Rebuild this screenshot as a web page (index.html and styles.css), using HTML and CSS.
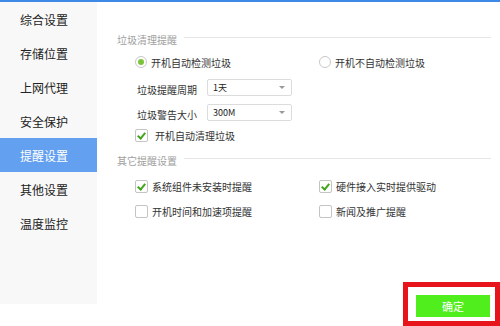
FILE: index.html
```html
<!DOCTYPE html>
<html lang="zh-CN">
<head>
    <meta charset="UTF-8">
    <meta name="viewport" content="width=device-width, initial-scale=1.0">
    <title>提醒设置</title>
    <link rel="stylesheet" href="styles.css">
</head>
<body>
    <div class="topbar"></div>
    <div class="window">
        <ul class="sidebar">
            <li>综合设置</li>
            <li>存储位置</li>
            <li>上网代理</li>
            <li>安全保护</li>
            <li class="active">提醒设置</li>
            <li>其他设置</li>
            <li>温度监控</li>
        </ul>
        <div class="content">
            <div class="section-title"><span>垃圾清理提醒</span></div>
            <div class="row radios">
                <label class="opt"><span class="radio checked"></span>开机自动检测垃圾</label>
                <label class="opt right"><span class="radio"></span>开机不自动检测垃圾</label>
            </div>
            <div class="row field first">
                <span class="field-label">垃圾提醒周期</span>
                <div class="select">1天<span class="arrow"></span></div>
            </div>
            <div class="row field">
                <span class="field-label">垃圾警告大小</span>
                <div class="select">300M<span class="arrow"></span></div>
            </div>
            <div class="row checks single">
                <label class="opt"><span class="check checked"></span>开机自动清理垃圾</label>
            </div>

            <div class="section-title second"><span>其它提醒设置</span></div>
            <div class="row checks">
                <label class="opt"><span class="check checked"></span>系统组件未安装时提醒</label>
                <label class="opt right"><span class="check checked"></span>硬件接入实时提供驱动</label>
            </div>
            <div class="row checks">
                <label class="opt"><span class="check"></span>开机时间和加速项提醒</label>
                <label class="opt right"><span class="check"></span>新闻及推广提醒</label>
            </div>

            <div class="footer">
                <span class="highlight"><button class="ok">确定</button></span>
            </div>
        </div>
    </div>
</body>
</html>
```

FILE: styles.css
```css
body {
    margin: 0;
    font-family: "Noto Sans CJK SC", "Noto Sans", sans-serif;
    color: #333;
    background: #fff;
    overflow: hidden;
}
.topbar {
    height: 2px;
    background: #3d8ae6;
}
.window {
    display: flex;
    height: 324px;
}
.sidebar {
    list-style: none;
    margin: 0;
    padding: 0;
    width: 97px;
    height: 302px;
    background: #f8f8f8;
    flex-shrink: 0;
}
.sidebar li {
    height: 34px;
    line-height: 36px;
    padding-left: 20px;
    font-size: 12px;
    color: #222;
}
.sidebar li.active {
    background: #64a0f0;
    color: #fff;
}
.content {
    flex: 1;
    display: flex;
    flex-direction: column;
    padding: 0 9px 0 20px;
    font-size: 10px;
}
.section-title {
    display: flex;
    align-items: center;
    gap: 7px;
    margin-top: 29px;
    height: 16px;
    color: #a0a0a0;
}
.section-title::after {
    content: "";
    flex: 1;
    height: 1px;
    background: #e6e6e6;
    margin-top: -3px;
}
.section-title.second {
    margin-top: 10px;
}
.row {
    display: flex;
    align-items: center;
    padding-left: 18px;
}
.radios {
    height: 16px;
    margin-top: 7px;
}
.opt {
    display: flex;
    align-items: center;
    width: 184px;
    white-space: nowrap;
}
.opt.right {
    width: auto;
}
.radio {
    width: 10px;
    height: 10px;
    border: 1px solid #c8c8c8;
    border-radius: 50%;
    margin-right: 4px;
    display: flex;
    align-items: center;
    justify-content: center;
}
.radio.checked::after {
    content: "";
    width: 6px;
    height: 6px;
    border-radius: 50%;
    background: #7cc33a;
}
.field {
    height: 17px;
    margin-top: 8px;
    padding-left: 20px;
}
.field.first {
    margin-top: 9px;
}
.field-label {
    width: 70px;
    margin-top: 3px;
}
.select {
    position: relative;
    width: 78px;
    height: 15px;
    border: 1px solid #dcdcdc;
    border-radius: 2px;
    padding-left: 5px;
    font-size: 9px;
    line-height: 15px;
    color: #222;
}
.arrow {
    position: absolute;
    right: 6px;
    top: 6px;
    border-left: 3px solid transparent;
    border-right: 3px solid transparent;
    border-top: 3px solid #999;
}
.checks {
    height: 14px;
    margin-top: 11px;
}
.checks.single {
    margin-top: 7px;
}
.check {
    position: relative;
    width: 11px;
    height: 11px;
    border: 1px solid #c4c4c4;
    border-radius: 2px;
    margin-right: 4px;
    background: #fff;
}
.check.checked::after {
    content: "";
    position: absolute;
    left: 3px;
    top: 1px;
    width: 3px;
    height: 6px;
    border-right: 2px solid #43a51d;
    border-bottom: 2px solid #43a51d;
    transform: rotate(40deg);
}
.checks.single .check {
    margin-right: 7px;
}
.footer {
    margin-top: auto;
    display: flex;
    justify-content: flex-end;
    padding-bottom: 9px;
    margin-right: 1px;
}
.highlight {
    position: relative;
    display: flex;
}
.highlight::after {
    content: "";
    position: absolute;
    left: -13px;
    right: -10px;
    top: -13px;
    bottom: -9px;
    border: 5px solid #e8141c;
}
.ok {
    width: 74px;
    height: 22px;
    border: none;
    background: #50ee1c;
    color: #fff;
    font-family: "Noto Sans CJK SC", sans-serif;
    font-size: 11px;
    padding: 0;
}
```
